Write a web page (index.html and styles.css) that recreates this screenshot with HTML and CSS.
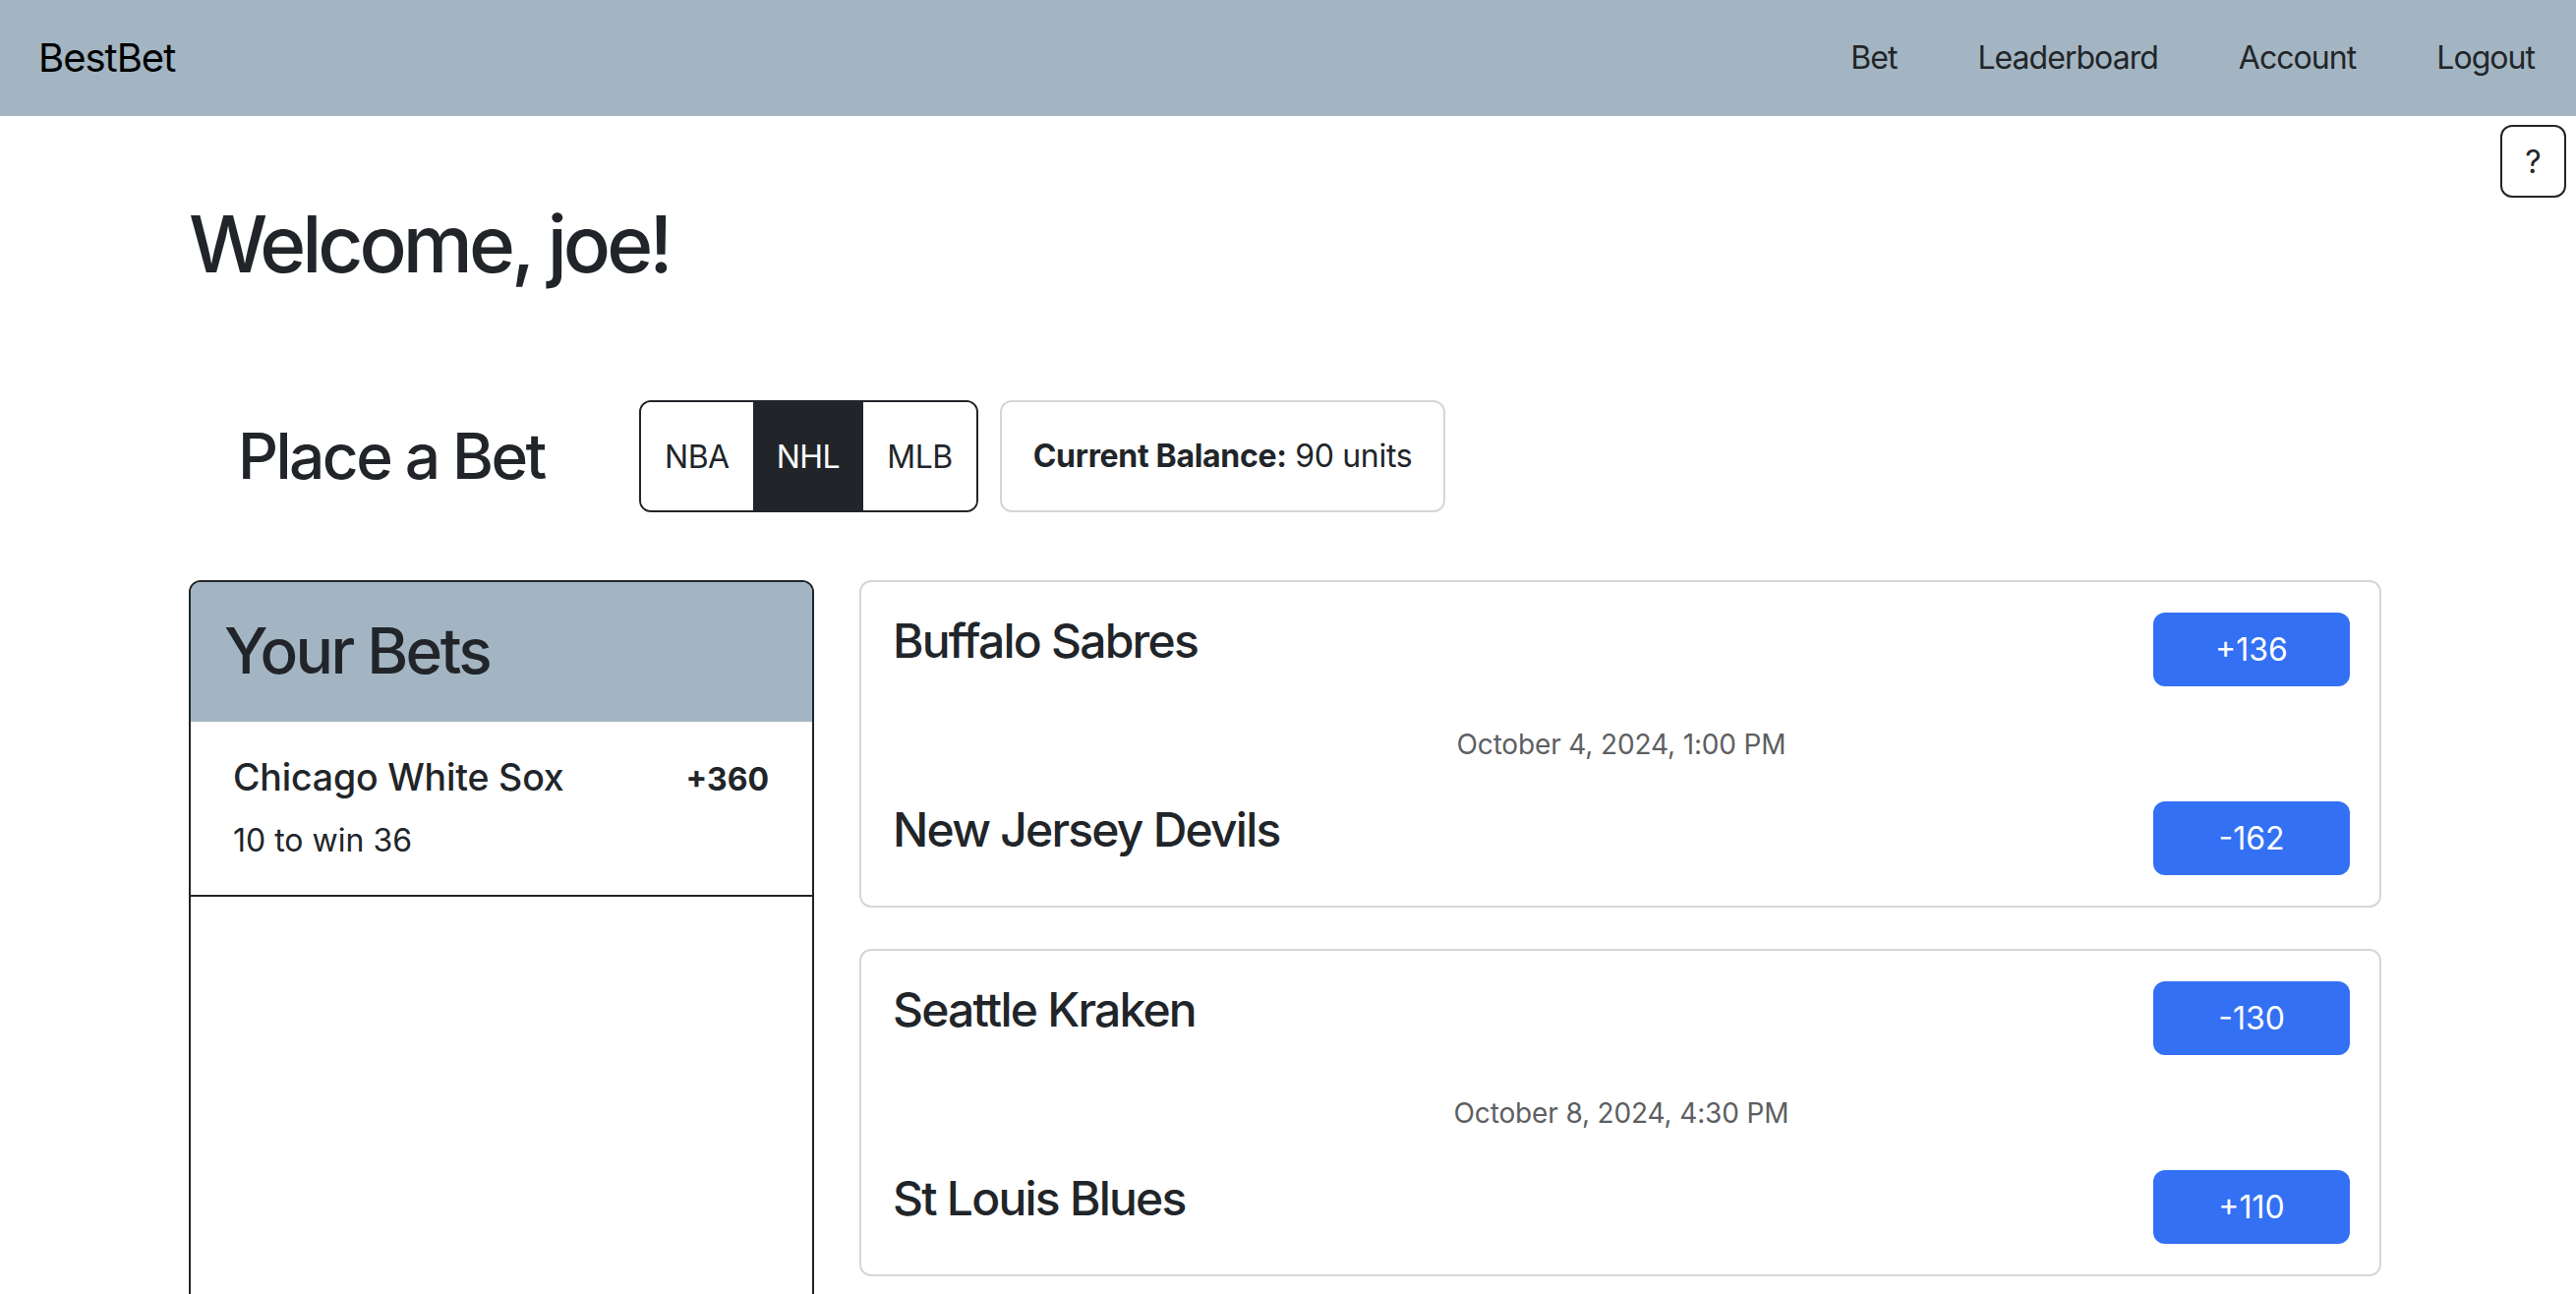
FILE: index.html
```html
<!DOCTYPE html>
<html lang="en">
<head>
<meta charset="utf-8">
<title>BestBet</title>
<link rel="stylesheet" href="styles.css">
</head>
<body>
<nav class="navbar">
  <a class="brand" href="#">BestBet</a>
  <div class="nav-links">
    <a class="nav-link" href="#">Bet</a>
    <a class="nav-link" href="#">Leaderboard</a>
    <a class="nav-link" href="#">Account</a>
    <a class="nav-link" href="#">Logout</a>
  </div>
</nav>
<button class="help-btn">?</button>
<main class="container">
  <h1 class="welcome">Welcome, joe!</h1>
  <div class="bet-bar">
    <h2 class="bet-title">Place a Bet</h2>
    <div class="league-group">
      <button class="league-btn">NBA</button>
      <button class="league-btn active">NHL</button>
      <button class="league-btn">MLB</button>
    </div>
    <div class="balance"><strong>Current Balance:</strong>&nbsp;90 units</div>
  </div>
  <div class="main-row">
    <aside class="your-bets">
      <div class="yb-header"><h2 class="yb-title">Your Bets</h2></div>
      <div class="yb-item">
        <div class="yb-top">
          <span class="yb-team">Chicago White Sox</span>
          <span class="yb-odds">+360</span>
        </div>
        <div class="yb-stake">10 to win 36</div>
      </div>
    </aside>
    <section class="games">
      <div class="game-card">
        <div class="team-row">
          <h4 class="team">Buffalo Sabres</h4>
          <button class="odds-btn">+136</button>
        </div>
        <div class="game-date">October 4, 2024, 1:00 PM</div>
        <div class="team-row">
          <h4 class="team">New Jersey Devils</h4>
          <button class="odds-btn">-162</button>
        </div>
      </div>
      <div class="game-card">
        <div class="team-row">
          <h4 class="team">Seattle Kraken</h4>
          <button class="odds-btn">-130</button>
        </div>
        <div class="game-date">October 8, 2024, 4:30 PM</div>
        <div class="team-row">
          <h4 class="team">St Louis Blues</h4>
          <button class="odds-btn">+110</button>
        </div>
      </div>
    </section>
  </div>
</main>
</body>
</html>
```

FILE: styles.css
```css
* { box-sizing: border-box; }

html, body {
  margin: 0;
  padding: 0;
  background: #ffffff;
  color: #212529;
  font-family: Inter, "Noto Sans", "Liberation Sans", sans-serif;
  font-size: 32px;
  line-height: 1.5;
}

a { text-decoration: none; color: inherit; }
button { font-family: inherit; }

.navbar {
  height: 118px;
  background: #a3b5c2;
  display: flex;
  align-items: center;
  justify-content: space-between;
  padding: 0 42px 0 39px;
}

.brand {
  font-size: 40px;
  color: #000;
  line-height: 1.2;
  letter-spacing: -0.025em;
}

.nav-links {
  display: flex;
  align-items: center;
  gap: 82px;
}

.nav-link {
  font-size: 32px;
  color: #212529;
  line-height: 1.5;
  letter-spacing: -0.03em;
}

.help-btn {
  position: absolute;
  top: 127px;
  right: 10px;
  width: 67px;
  height: 74px;
  border: 2px solid #212529;
  border-radius: 12px;
  background: #fff;
  color: #212529;
  font-size: 32px;
  padding: 0;
  display: flex;
  align-items: center;
  justify-content: center;
}

.container {
  margin-left: 192px;
  width: 2230px;
}

.welcome {
  margin: 82px 0 0 0;
  font-size: 80px;
  font-weight: 500;
  line-height: 96px;
  height: 96px;
  letter-spacing: -0.05em;
}

.bet-bar {
  margin-top: 111px;
  height: 114px;
  display: flex;
  align-items: center;
  padding-left: 50px;
}

.bet-title {
  margin: 0;
  flex: 0 0 408px;
  font-size: 64px;
  font-weight: 500;
  line-height: 1.2;
  letter-spacing: -0.04em;
}

.league-group {
  display: flex;
  height: 114px;
  border: 2px solid #212529;
  border-radius: 12px;
  overflow: hidden;
}

.league-btn {
  border: none;
  background: #fff;
  color: #212529;
  font-size: 32px;
  padding: 0 24px;
  height: 100%;
  letter-spacing: -0.015em;
}

.league-btn.active {
  background: #212529;
  color: #fff;
}

.balance {
  margin-left: 22px;
  height: 114px;
  border: 2px solid #d6d6d6;
  border-radius: 12px;
  display: flex;
  align-items: center;
  padding: 0 32px;
  font-size: 32px;
  white-space: nowrap;
  letter-spacing: -0.01em;
}

.balance strong { font-weight: 700; }

.main-row {
  margin-top: 69px;
  display: flex;
  align-items: flex-start;
  gap: 46px;
}

.your-bets {
  flex: 0 0 636px;
  min-height: 820px;
  border: 2px solid #212529;
  border-radius: 12px;
  overflow: hidden;
}

.yb-header {
  background: #a3b5c2;
  height: 142px;
  padding: 32px 34px 0;
}

.yb-title {
  margin: 0;
  font-size: 64px;
  font-weight: 500;
  line-height: 1.2;
  letter-spacing: -0.04em;
}

.yb-item {
  padding: 34px 44px 31px 43px;
  border-bottom: 2px solid #212529;
}

.yb-top {
  display: flex;
  justify-content: space-between;
  align-items: baseline;
}

.yb-team {
  font-size: 37.5px;
  font-weight: 500;
  line-height: 1.2;
  letter-spacing: -0.005em;
}

.yb-odds {
  font-size: 32px;
  font-weight: 700;
  line-height: 1.2;
}

.yb-stake {
  margin-top: 18px;
  font-size: 32px;
  line-height: 48px;
}

.games {
  flex: 0 0 1548px;
  display: flex;
  flex-direction: column;
  gap: 42px;
}

.game-card {
  border: 2px solid #d6d6d6;
  border-radius: 12px;
  padding: 31px 30px 31px 32px;
}

.team-row {
  display: flex;
  justify-content: space-between;
  align-items: flex-start;
  height: 75px;
}

.team {
  margin: 0;
  font-size: 48px;
  font-weight: 500;
  line-height: 1.2;
  letter-spacing: -0.037em;
}

.odds-btn {
  width: 200px;
  height: 75px;
  border: none;
  border-radius: 12px;
  background: #3370f4;
  color: #fff;
  font-size: 32px;
}

.game-date {
  height: 117px;
  display: flex;
  align-items: center;
  justify-content: center;
  font-size: 28px;
  color: #5c5f63;
  letter-spacing: -0.005em;
}
```
